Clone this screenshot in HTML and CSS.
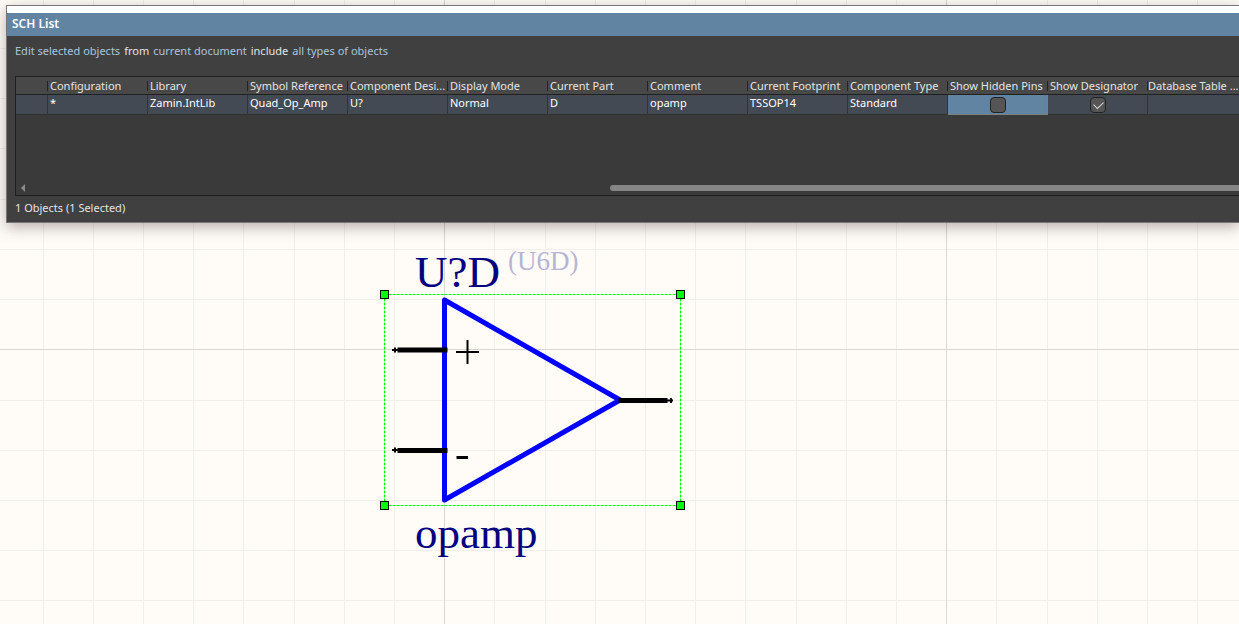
FILE: index.html
```html
<!DOCTYPE html>
<html lang="en">
<head>
<meta charset="utf-8">
<title>SCH List</title>
<link rel="stylesheet" href="styles.css">
</head>
<body>
<main class="workspace">
  <svg class="sheet" width="100%" height="100%" role="img" aria-label="Schematic sheet with op amp symbol">
    <defs>
      <pattern id="grid" x="-58" y="-153" width="502" height="502" patternUnits="userSpaceOnUse">
        <path class="grid-minor" d="M50.5 0V502M101.5 0V502M151.5 0V502M201.5 0V502M251.5 0V502M301.5 0V502M352.5 0V502M402.5 0V502M452.5 0V502"/>
        <path class="grid-minor" d="M0 51.5H502M0 101.5H502M0 151.5H502M0 201.5H502M0 251.5H502M0 301.5H502M0 352.5H502M0 402.5H502M0 452.5H502"/>
        <path class="grid-major" d="M0.5 0V502M0 0.5H502"/>
      </pattern>
    </defs>
    <rect width="100%" height="100%" fill="url(#grid)"/>
    <path class="selection" d="M384.5 294.5H680.5M384.5 505.5H680.5M384.5 294.5V505.5M680.5 294.5V505.5"/>
    <path class="body-outline" d="M444.5 300V500L620 400Z"/>
    <path class="pin" d="M400 350H445M400 450.500H445M621 400.500H665"/>
    <path class="pin-end" d="M392 350H399M395 347.500V352.500M392 450H399M395 447.500V452.500M667 400.500H673M671 398V403"/>
    <path class="plus" d="M456 352H479M467.500 340V364"/>
    <path class="minus" d="M456.500 457.500H468"/>
    <g class="handles">
      <rect x="380.500" y="290.500" width="8" height="8"/>
      <rect x="676.500" y="290.500" width="8" height="8"/>
      <rect x="380.500" y="501.500" width="8" height="8"/>
      <rect x="676.500" y="501.500" width="8" height="8"/>
    </g>
    <text class="label" x="415" y="287">U?D</text>
    <text class="label-hint" x="508" y="270">(U6D)</text>
    <text class="label" x="415" y="548">opamp</text>
  </svg>

  <section class="panel" aria-labelledby="panel-title">
    <h1 class="panel-title" id="panel-title">SCH List</h1>
    <div class="panel-body">
      <p class="filter"><a href="#">Edit selected objects</a> <span>from</span> <a href="#">current document</a> <span>include</span> <a href="#">all types of objects</a></p>
      <div class="grid-view">
        <table class="objects">
          <thead>
            <tr>
              <th class="marker"></th>
              <th>Configuration</th>
              <th>Library</th>
              <th>Symbol Reference</th>
              <th>Component Desi...</th>
              <th>Display Mode</th>
              <th>Current Part</th>
              <th>Comment</th>
              <th>Current Footprint</th>
              <th>Component Type</th>
              <th>Show Hidden Pins</th>
              <th>Show Designator</th>
              <th class="last">Database Table ...</th>
            </tr>
          </thead>
          <tbody>
            <tr>
              <td></td>
              <td>*</td>
              <td>Zamin.IntLib</td>
              <td>Quad_Op_Amp</td>
              <td>U?</td>
              <td>Normal</td>
              <td>D</td>
              <td>opamp</td>
              <td>TSSOP14</td>
              <td>Standard</td>
              <td class="check-cell active"><input type="checkbox" class="check" aria-label="Show Hidden Pins"></td>
              <td class="check-cell"><input type="checkbox" class="check" aria-label="Show Designator" checked></td>
              <td class="last"></td>
            </tr>
          </tbody>
        </table>
        <div class="scrollbar">
          <button class="scroll-left" type="button" aria-label="Scroll left"><svg width="4" height="8" viewBox="0 0 4 8"><path d="M4 0V8L0 4Z" fill="#8c8c8c"/></svg></button>
          <div class="thumb"></div>
        </div>
      </div>
      <p class="status">1 Objects (1 Selected)</p>
    </div>
  </section>
</main>
</body>
</html>
```
FILE: styles.css
```css
* {
  box-sizing: border-box;
}

body {
  margin: 0;
  background: #fffcf8;
  font-family: "Noto Sans", "Open Sans", sans-serif;
  font-size: 11px;
  line-height: 16px;
}

.workspace {
  position: relative;
  min-height: 100vh;
  padding: 5px 0 0 6px;
  overflow: hidden;
}

.sheet {
  position: absolute;
  inset: 0;
}

.grid-minor {
  stroke: #f1eeeb;
}

.grid-major {
  stroke: #d9d6d3;
}

.selection {
  stroke: #00ff00;
  stroke-dasharray: 3 1;
}

.body-outline {
  fill: none;
  stroke: #0000ff;
  stroke-width: 5;
  stroke-linejoin: round;
}

.pin {
  stroke: #000;
  stroke-width: 5;
  stroke-linecap: square;
}

.pin-end {
  stroke: #000;
  stroke-width: 2;
}

.plus {
  stroke: #000;
  stroke-width: 2;
}

.minus {
  stroke: #000;
  stroke-width: 3;
}

.handles {
  fill: #00ff00;
  stroke: #000;
}

.label,
.label-hint {
  font-family: "Liberation Serif", "Times New Roman", serif;
}

.label {
  font-size: 45px;
  fill: #000080;
}

.label-hint {
  font-size: 27px;
  fill: #b8b4d6;
}

.panel {
  position: relative;
  border: solid #77777b;
  border-width: 1px 0 1px 1px;
  background: #404040;
  color: #e4e4e4;
  box-shadow: 0 4px 14px rgba(50, 30, 30, 0.35);
}

.panel-title {
  margin: 0;
  padding: 3px 5px 4px;
  border-top: 7px solid #fff;
  background: #6284a3;
  color: #fff;
  font-size: 12px;
  line-height: 16px;
  font-weight: 600;
}

.panel-body {
  padding: 7px 0 6px 8px;
  overflow: hidden;
}

.filter {
  display: flex;
  gap: 4px;
  margin: 0 0 17px;
}

.filter a {
  color: #a9c5dd;
  text-decoration: none;
}

.grid-view {
  display: flex;
  flex-direction: column;
  height: 120px;
  border: solid #1f1f1f;
  border-width: 1px 0 1px 1px;
  background: #3a3a3a;
}

.objects {
  width: 100%;
  table-layout: fixed;
  border-collapse: separate;
  border-spacing: 0;
}

.objects th,
.objects td {
  width: 100px;
  padding: 0 0 0 2px;
  white-space: nowrap;
  text-align: left;
}

.objects .marker {
  width: 32px;
}

.objects th {
  height: 18px;
  border-bottom: 1px solid #202020;
  background: linear-gradient(90deg, #242424, #242424) right 4px / 1px 10px no-repeat, #484848;
  font-weight: 400;
}

.objects td {
  height: 20px;
  padding-bottom: 3px;
  border-right: 1px solid #30343a;
  border-bottom: 1px solid #303030;
  background: #434a53;
  color: #fff;
}

.objects .last {
  width: auto;
  padding-left: 0;
  border-right: 0;
  background-image: none;
}

.objects .check-cell {
  padding: 0;
  text-align: center;
}

.objects .active {
  border-color: #80807b;
  background: #6284a3;
}

.check {
  appearance: none;
  display: block;
  width: 16px;
  height: 16px;
  margin: 0 auto;
  border: 1px solid #222;
  border-radius: 4px;
  background: #555;
}

.check:checked::before {
  content: "";
  display: block;
  width: 8px;
  height: 5px;
  margin: 3px;
  border: solid #d8d8d8;
  border-width: 0 0 1px 1px;
  transform: rotate(-45deg);
}

.scrollbar {
  display: flex;
  align-items: center;
  height: 14px;
  margin-top: auto;
}

.scroll-left {
  display: flex;
  width: 16px;
  padding: 0 0 0 5px;
  border: 0;
  background: none;
}

.thumb {
  width: 51.4%;
  height: 6px;
  margin-left: auto;
  border-radius: 3px 0 0 3px;
  background: #858585;
}

.status {
  margin: 4px 0 0;
}
```
